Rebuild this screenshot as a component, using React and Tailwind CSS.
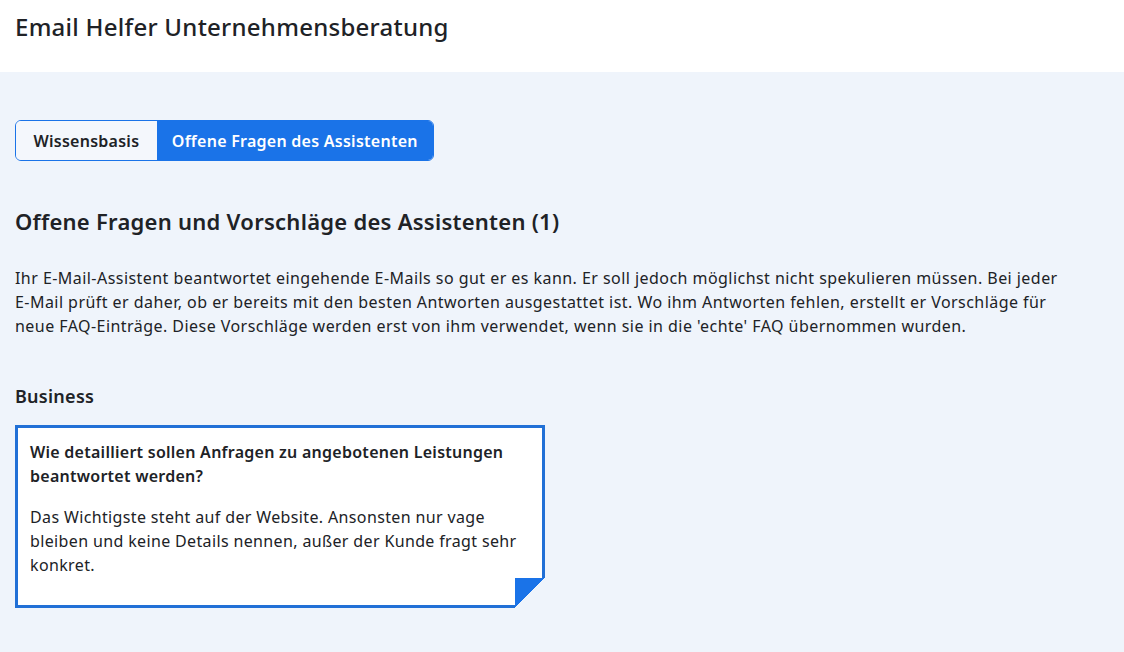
import React, { useState } from "react";

const questions = [
  {
    category: "Business",
    question: "Wie detailliert sollen Anfragen zu angebotenen Leistungen beantwortet werden?",
    answer:
      "Das Wichtigste steht auf der Website. Ansonsten nur vage bleiben und keine Details nennen, außer der Kunde fragt sehr konkret.",
  },
];

function App() {
  const [tab, setTab] = useState("offen");

  return (
    <div className="min-h-screen bg-[#eff4fb] text-[#202226] font-['Noto_Sans',sans-serif] tracking-[0.26px]">
      {/* Header */}
      <div className="h-[72px] bg-white px-[15px] pt-[11px]">
        <h1 className="text-[24px] leading-[32px] font-medium">Email Helfer Unternehmensberatung</h1>
      </div>

      <div className="px-[15px] pt-12 pb-10">
        {/* Tabs */}
        <div className="inline-flex h-[41px] rounded-md border border-[#1a73e8] overflow-hidden">
          <button
            onClick={() => setTab("wissen")}
            className={`px-[17.5px] text-[16px] font-semibold ${
              tab === "wissen" ? "bg-[#1a73e8] text-white" : "bg-[#f4f7fc] text-[#202226]"
            }`}
          >
            Wissensbasis
          </button>
          <button
            onClick={() => setTab("offen")}
            className={`px-[15px] text-[16px] font-semibold ${
              tab === "offen" ? "bg-[#1a73e8] text-white" : "bg-[#f4f7fc] text-[#202226]"
            }`}
          >
            Offene Fragen des Assistenten
          </button>
        </div>

        <h2 className="mt-[46px] text-[22px] leading-[28px] font-semibold">
          Offene Fragen und Vorschläge des Assistenten ({questions.length})
        </h2>

        <p className="mt-[31px] max-w-[1072px] text-[16px] leading-[24px] tracking-[0.45px]">
          Ihr E-Mail-Assistent beantwortet eingehende E-Mails so gut er es kann. Er soll jedoch möglichst nicht
          spekulieren müssen. Bei jeder <span className="whitespace-nowrap">E-Mail</span> prüft er daher, ob er bereits
          mit den besten Antworten ausgestattet ist. Wo ihm Antworten fehlen, erstellt er Vorschläge für neue{" "}
          <span className="whitespace-nowrap">FAQ-Einträge</span>. Diese Vorschläge werden erst von ihm verwendet, wenn
          sie in die 'echte' FAQ übernommen wurden.
        </p>

        {questions.map((q, i) => (
          <div key={i}>
            <h3 className="mt-[44px] text-[18px] leading-[28px] font-semibold">{q.category}</h3>
            {/* Card with folded corner */}
            <div className="relative mt-[15px] w-[530px] border-[3px] border-[#2170d6] bg-white px-3 pt-3 pb-7">
              <p className="text-[16px] leading-[24px] font-semibold">{q.question}</p>
              <p className="mt-[17px] text-[16px] leading-[24px] tracking-[0.36px]">{q.answer}</p>
              <div className="absolute -right-[3px] -bottom-[3px] h-[30px] w-[30px] bg-[linear-gradient(135deg,#1a73e8_50%,#eff4fb_50%)]" />
            </div>
          </div>
        ))}
      </div>
    </div>
  );
}

export default App;
